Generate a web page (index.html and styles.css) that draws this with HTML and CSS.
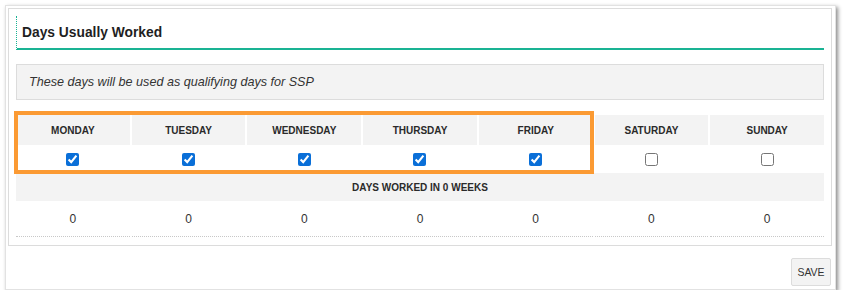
FILE: index.html
```html
<!DOCTYPE html>
<html>
<head>
<meta charset="utf-8">
<link rel="stylesheet" href="styles.css">
</head>
<body>
<div class="panel">
  <div class="box">
    <div class="title">Days Usually Worked</div>
    <div class="info">These days will be used as qualifying days for SSP</div>
    <div class="days">
      <div class="hd">MONDAY</div>
      <div class="hd">TUESDAY</div>
      <div class="hd">WEDNESDAY</div>
      <div class="hd">THURSDAY</div>
      <div class="hd">FRIDAY</div>
      <div class="hd">SATURDAY</div>
      <div class="hd">SUNDAY</div>
      <div class="cb"><input type="checkbox" checked></div>
      <div class="cb"><input type="checkbox" checked></div>
      <div class="cb"><input type="checkbox" checked></div>
      <div class="cb"><input type="checkbox" checked></div>
      <div class="cb"><input type="checkbox" checked></div>
      <div class="cb"><input type="checkbox"></div>
      <div class="cb"><input type="checkbox"></div>
      <div class="worked">DAYS WORKED IN 0 WEEKS</div>
      <div class="val">0</div>
      <div class="val">0</div>
      <div class="val">0</div>
      <div class="val">0</div>
      <div class="val">0</div>
      <div class="val">0</div>
      <div class="val">0</div>
      <div class="highlight"></div>
    </div>
  </div>
  <div class="actions">
    <button class="save">SAVE</button>
  </div>
</div>
</body>
</html>
```
FILE: styles.css
```css
html, body {
  margin: 0;
  padding: 0;
  background: #fff;
}
body {
  font-family: "Liberation Sans", Arial, sans-serif;
  color: #333;
}
.panel {
  margin: 5px 0 0 5px;
  width: 824px;
  height: 281px;
  border: 1px solid #e2e2e2;
  box-shadow: 2px 2px 4px rgba(0, 0, 0, 0.45);
  padding: 2px 3px 0 2px;
  box-sizing: content-box;
  display: flex;
  flex-direction: column;
}
.box {
  border: 1px solid #dcdcdc;
  padding: 7px 7px 8px 7px;
}
.title {
  height: 32px;
  border-left: 1px dotted #1ab394;
  border-bottom: 2px solid #1ab394;
  padding-left: 5px;
  font-size: 13.8px;
  font-weight: bold;
  color: #1f1f1f;
  display: flex;
  align-items: center;
}
.info {
  margin-top: 14px;
  height: 34px;
  background: #f3f3f3;
  border: 1px solid #dcdcdc;
  padding-left: 12px;
  font-size: 12.6px;
  font-style: italic;
  color: #333;
  display: flex;
  align-items: center;
}
.days {
  position: relative;
  margin-top: 15px;
  display: grid;
  grid-template-columns: repeat(7, 1fr);
  column-gap: 2px;
  grid-template-rows: 30px 28px 28px 36px;
}
.hd {
  background: #f3f3f3;
  font-size: 10px;
  font-weight: bold;
  color: #2a2a2a;
  display: flex;
  align-items: center;
  justify-content: center;
}
.cb {
  display: flex;
  align-items: center;
  justify-content: center;
}
.cb input {
  margin: 0;
  width: 13px;
  height: 13px;
  accent-color: #0a6fd8;
}
.worked {
  grid-column: 1 / -1;
  background: #f3f3f3;
  font-size: 10px;
  font-weight: bold;
  color: #2a2a2a;
  display: flex;
  align-items: center;
  justify-content: center;
}
.val {
  border-bottom: 1px dotted #c8c8c8;
  font-size: 12px;
  color: #333;
  display: flex;
  align-items: center;
  justify-content: center;
}
.highlight {
  position: absolute;
  left: -2px;
  top: -4px;
  width: 572px;
  height: 55px;
  border: 4px solid #fb9a33;
  pointer-events: none;
}
.actions {
  flex: 1;
  display: flex;
  justify-content: flex-end;
  align-items: flex-start;
  padding-top: 12px;
  padding-right: 1px;
}
.save {
  width: 40px;
  height: 28px;
  padding: 0;
  background: #f3f3f3;
  border: 1px solid #dcdcdc;
  border-radius: 2px;
  font-family: "Liberation Sans", Arial, sans-serif;
  font-size: 10.5px;
  color: #333;
}
```
